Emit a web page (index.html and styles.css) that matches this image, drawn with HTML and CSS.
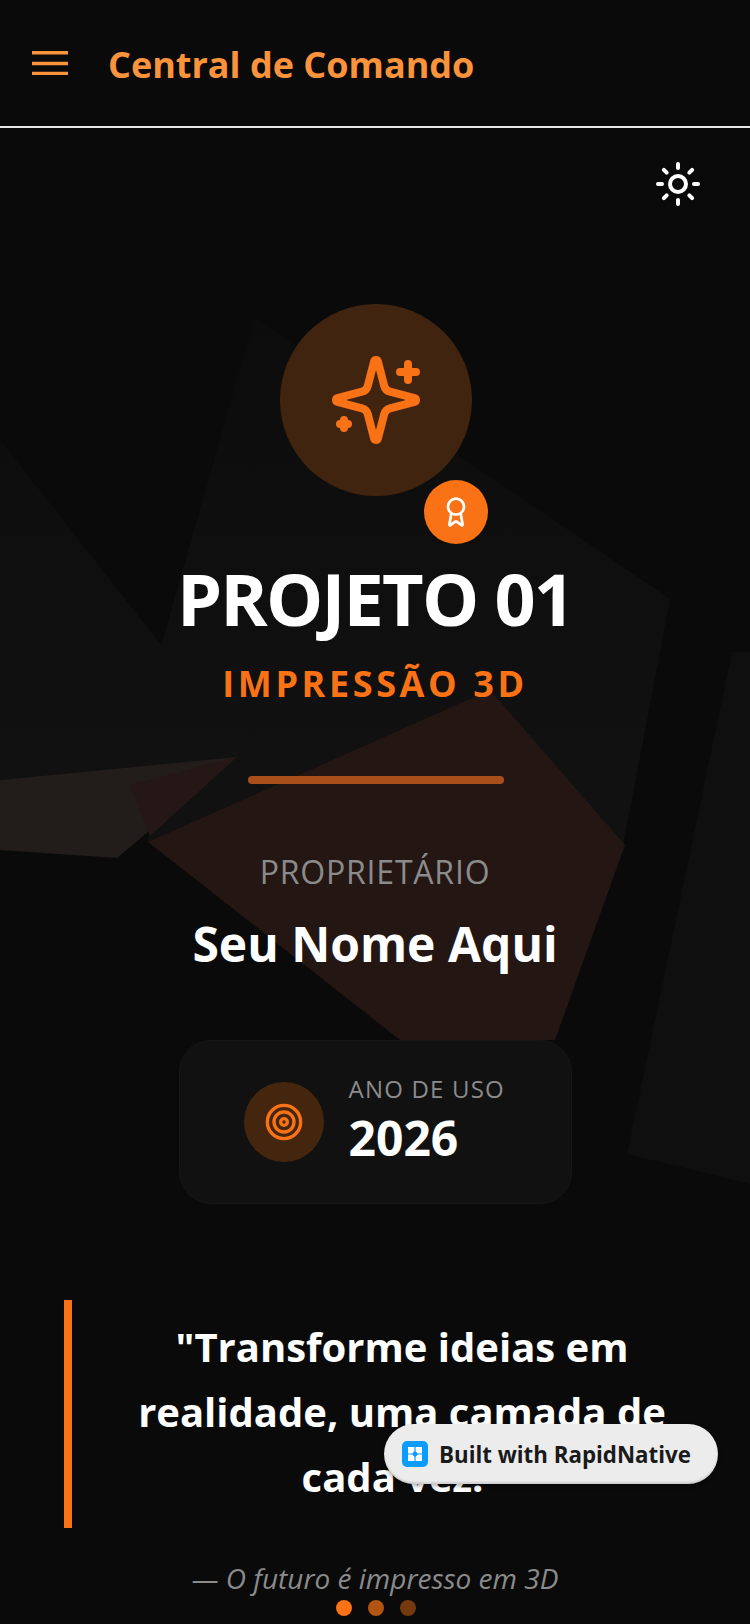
FILE: index.html
```html
<!DOCTYPE html>
<html lang="pt">
<head>
  <meta charset="UTF-8" />
  <meta name="viewport" content="width=device-width, initial-scale=1.0"/>
  <title>Central de Comando</title>
  <link rel="stylesheet" href="styles.css">
</head>
<body>
  <div class="screen">
    <svg class="shapes" viewBox="0 0 750 1624">
      <defs>
        <linearGradient id="fadeGrey" gradientUnits="userSpaceOnUse" x1="0" y1="320" x2="0" y2="760">
          <stop offset="0" stop-color="#0c0c0c"/>
          <stop offset="1" stop-color="#111111"/>
        </linearGradient>
      </defs>
      <polygon fill="url(#fadeGrey)" points="255,318 670,599 623,845 490,800 148,842 160,650"/>
      <polygon fill="url(#fadeGrey)" points="0,440 165,650 240,757 0,780"/>
      <polygon fill="#241613" points="148,842 490,690 625,845 555,1040 400,1040"/>
      <polygon fill="#221d1b" points="0,780 237,757 117,858 0,850"/>
      <polygon fill="#241715" points="130,785 237,757 150,836"/>
      <polygon fill="#0f0f0f" points="732,652 750,652 750,1184 627,1154"/>
    </svg>

    <header class="topbar">
      <svg class="menu-icon" viewBox="0 0 36 24"><path d="M0 1.75h36M0 12.5h36M0 22.5h36"/></svg>
      <h1 class="topbar-title">Central de Comando</h1>
    </header>

    <main class="content">
      <div class="theme-row">
        <svg class="sun-icon" viewBox="0 0 24 24">
          <circle cx="12" cy="12" r="4"/>
          <path d="M12 2v2M12 20v2M4.93 4.93l1.41 1.41M17.66 17.66l1.41 1.41M2 12h2M20 12h2M6.34 17.66l-1.41 1.41M19.07 4.93l-1.41 1.41"/>
        </svg>
      </div>

      <section class="hero">
        <div class="emblem">
          <svg class="sparkle-icon" viewBox="0 0 24 24">
            <path d="M9.937 15.5A2 2 0 0 0 8.5 14.063l-6.135-1.582a.5.5 0 0 1 0-.962L8.5 9.936A2 2 0 0 0 9.937 8.5l1.582-6.135a.5.5 0 0 1 .963 0L14.063 8.5A2 2 0 0 0 15.5 9.937l6.135 1.581a.5.5 0 0 1 0 .964L15.5 14.063a2 2 0 0 0-1.437 1.437l-1.582 6.135a.5.5 0 0 1-.963 0z"/>
            <path d="M20 3v4M22 5h-4M4 17v2M5 18H3"/>
          </svg>
          <span class="badge">
            <svg class="award-icon" viewBox="0 0 24 24">
              <path d="m15.477 12.89 1.515 8.526a.5.5 0 0 1-.81.47l-3.58-2.687a1 1 0 0 0-1.197 0l-3.586 2.686a.5.5 0 0 1-.81-.469l1.514-8.526"/>
              <circle cx="12" cy="8" r="6"/>
            </svg>
          </span>
        </div>
        <h2 class="project-title">PROJETO 01</h2>
        <p class="project-sub">IMPRESSÃO 3D</p>
        <div class="divider"></div>
        <p class="owner-label">PROPRIETÁRIO</p>
        <p class="owner-name">Seu Nome Aqui</p>
      </section>

      <div class="year-card">
        <span class="year-icon">
          <svg class="target-icon" viewBox="0 0 24 24">
            <circle cx="12" cy="12" r="10"/>
            <circle cx="12" cy="12" r="6"/>
            <circle cx="12" cy="12" r="2"/>
          </svg>
        </span>
        <div>
          <p class="year-label">ANO DE USO</p>
          <p class="year-value">2026</p>
        </div>
      </div>

      <blockquote class="quote">
        "Transforme ideias em realidade, uma camada de cada vez."
      </blockquote>
      <p class="quote-by">— O futuro é impresso em 3D</p>

      <div class="dots">
        <span class="dot"></span>
        <span class="dot dot-mid"></span>
        <span class="dot dot-low"></span>
      </div>
    </main>

    <a class="built-with">
      <svg class="built-logo" viewBox="0 0 26 26">
        <rect width="26" height="26" rx="5"/>
        <path class="built-mark" d="M6 6h6.4v4.2l-2.2 2.2H6zM13.6 6H20v6.4h-4.2l-2.2-2.2zM6 13.6h4.2l2.2 2.2V20H6zM15.8 13.6H20V20h-6.4v-4.2z"/>
      </svg>
      Built with RapidNative
    </a>
  </div>
</body>
</html>
```

FILE: styles.css
```css
* {
  box-sizing: border-box;
  margin: 0;
  padding: 0;
}
body {
  font-family: "Open Sans", sans-serif;
  background: #0a0a0a;
  color: #fff;
}
.screen {
  position: relative;
  width: 750px;
  height: 1624px;
  overflow: hidden;
}
.shapes {
  position: absolute;
  top: 0;
  left: 0;
  width: 750px;
  height: 1624px;
}

/* top bar */
.topbar {
  position: relative;
  display: flex;
  align-items: center;
  gap: 40px;
  height: 128px;
  padding: 0 32px;
  border-bottom: 2px solid #e6e6e6;
}
.menu-icon {
  width: 36px;
  height: 24px;
  fill: none;
  stroke: #fb923c;
  stroke-width: 3.5px;
}
.topbar-title {
  padding-top: 2px;
  font-size: 36px;
  font-weight: 700;
  color: #fb923c;
}

.content {
  position: relative;
  height: 1496px;
}
.theme-row {
  display: flex;
  justify-content: flex-end;
  padding: 32px 48px 0 0;
}
.sun-icon {
  width: 48px;
  height: 48px;
  fill: none;
  stroke: #fff;
  stroke-width: 2;
  stroke-linecap: round;
  stroke-linejoin: round;
}

/* project block */
.hero {
  display: flex;
  flex-direction: column;
  align-items: center;
  padding-top: 96px;
}
.emblem {
  position: relative;
  display: flex;
  align-items: center;
  justify-content: center;
  width: 192px;
  height: 192px;
  margin-left: 2px;
  border-radius: 50%;
  background: #40240f;
}
.sparkle-icon {
  width: 96px;
  height: 96px;
  fill: none;
  stroke: #f97316;
  stroke-width: 2;
  stroke-linecap: round;
  stroke-linejoin: round;
}
.badge {
  position: absolute;
  right: -16px;
  bottom: -48px;
  display: flex;
  align-items: center;
  justify-content: center;
  width: 64px;
  height: 64px;
  border-radius: 50%;
  background: #f97316;
}
.award-icon {
  width: 32px;
  height: 32px;
  fill: none;
  stroke: #fff;
  stroke-width: 2;
  stroke-linecap: round;
  stroke-linejoin: round;
}
.project-title {
  margin-top: 54px;
  font-size: 72px;
  line-height: 96px;
  font-weight: 700;
  letter-spacing: -1.8px;
}
.project-sub {
  margin-top: 14px;
  font-size: 36px;
  line-height: 48px;
  font-weight: 700;
  letter-spacing: 3.6px;
  color: #f97316;
}
.divider {
  width: 256px;
  height: 8px;
  margin: 68px 0 0 2px;
  border-radius: 4px;
  background: #a9501a;
}
.owner-label {
  margin-top: 66px;
  font-size: 32px;
  line-height: 44px;
  letter-spacing: 0.8px;
  color: #8b8b8b;
}
.owner-name {
  margin-top: 18px;
  font-size: 48px;
  line-height: 64px;
  font-weight: 700;
}

/* year card */
.year-card {
  display: flex;
  align-items: center;
  gap: 25px;
  width: 393px;
  height: 164px;
  margin: 64px auto 0;
  padding-left: 64px;
  border: 1px solid #161616;
  border-radius: 32px;
  background: #111;
}
.year-icon {
  display: flex;
  align-items: center;
  justify-content: center;
  width: 80px;
  height: 80px;
  border-radius: 50%;
  background: #44260f;
}
.target-icon {
  width: 40px;
  height: 40px;
  fill: none;
  stroke: #f97316;
  stroke-width: 2;
}
.year-label {
  margin-top: -2px;
  font-size: 24px;
  line-height: 32px;
  letter-spacing: 1.2px;
  color: #8b8b8b;
}
.year-value {
  margin-top: 1px;
  font-size: 48px;
  line-height: 64px;
  font-weight: 700;
}

/* quote */
.quote {
  width: 686px;
  height: 228px;
  margin: 96px 0 0 64px;
  padding: 14px 74px 0 56px;
  border-left: 8px solid #f97316;
  font-size: 40px;
  line-height: 65px;
  font-weight: 700;
  text-align: center;
}
.quote-by {
  margin-top: 28px;
  font-size: 28px;
  line-height: 44px;
  font-style: italic;
  color: #8b8b8b;
  text-align: center;
}
.dots {
  position: absolute;
  left: 2px;
  right: 0;
  bottom: 8px;
  display: flex;
  justify-content: center;
  gap: 16px;
}
.dot {
  width: 16px;
  height: 16px;
  border-radius: 50%;
  background: #f97316;
}
.dot-mid { opacity: 0.7; }
.dot-low { opacity: 0.45; }

/* floating tag */
.built-with {
  position: absolute;
  top: 1424px;
  left: 384px;
  display: flex;
  align-items: center;
  gap: 11px;
  width: 334px;
  height: 60px;
  padding-left: 18px;
  border-radius: 30px;
  background: #ececec;
  box-shadow: 0 2px 4px rgba(0,0,0,0.3), inset 0 -2px 2px rgba(0,0,0,0.12);
  font-size: 22.3px;
  font-weight: 700;
  color: #1a1a1a;
}
.built-logo {
  width: 26px;
  height: 26px;
  fill: #0a9cff;
}
.built-mark {
  fill: #fff;
}
```
